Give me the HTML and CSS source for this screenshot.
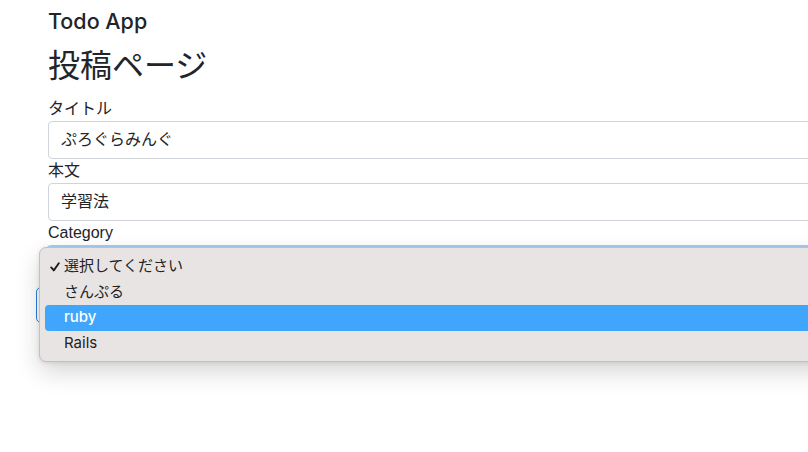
FILE: index.html
```html
<!DOCTYPE html>
<html lang="ja">
<head>
<meta charset="utf-8">
<title>Todo App</title>
<link rel="stylesheet" href="styles.css">
</head>
<body>
<div class="page">
  <div class="brand">Todo App</div>
  <h1 class="title">投稿ページ</h1>
  <form class="form">
    <label class="label">タイトル</label>
    <div class="input">ぷろぐらみんぐ</div>
    <label class="label">本文</label>
    <div class="input">学習法</div>
    <label class="label">Category</label>
    <div class="select-wrap">
      <div class="select"></div>
    </div>
    <div class="button"></div>
  </form>
  <div class="popup">
    <div class="item"><svg class="check" width="10" height="10" viewBox="0 0 10 10"><path d="M1.2 5.4 L3.8 8.4 L8.8 1.2" fill="none" stroke="#1e1e1e" stroke-width="1.9" stroke-linecap="round" stroke-linejoin="round"/></svg>選択してください</div>
    <div class="item">さんぷる</div>
    <div class="item active">ruby</div>
    <div class="item">Rails</div>
  </div>
</div>
</body>
</html>
```
FILE: styles.css
```css
html, body {
  margin: 0;
  padding: 0;
  background: #ffffff;
}
body {
  font-family: "Liberation Sans", "Noto Sans CJK JP", sans-serif;
  color: #212529;
  overflow: hidden;
  width: 808px;
  height: 452px;
}
.page {
  position: relative;
  padding-left: 48px;
  height: 452px;
}
.brand {
  font-family: Inter, "Liberation Sans", sans-serif;
  font-weight: 500;
  font-size: 21.5px;
  line-height: 26px;
  padding-top: 8px;
  height: 33px;
  box-sizing: border-box;
  color: #212529;
}
.title {
  margin: 0;
  font-weight: 400;
  font-size: 32px;
  line-height: 38px;
  padding-top: 14px;
  height: 52px;
  box-sizing: border-box;
  color: #212529;
}
.form {
  display: flex;
  flex-direction: column;
  padding-top: 12px;
}
.label {
  font-size: 16px;
  line-height: 24px;
  height: 24px;
}
.input {
  box-sizing: border-box;
  height: 38px;
  width: 800px;
  border: 1px solid #ced4da;
  border-radius: 4px;
  padding: 6px 12px;
  font-size: 16px;
  line-height: 24px;
  color: #212529;
}
.select {
  box-sizing: border-box;
  height: 38px;
  width: 800px;
  margin-top: 4px;
  border: 1px solid #86b7fe;
  border-radius: 4px;
  box-shadow: 0 0 0 4px #a9cdf6;
}
.button {
  box-sizing: border-box;
  margin-left: -12px;
  width: 80px;
  height: 36px;
  border: 1.5px solid #2f7de1;
  border-radius: 5px;
}
.popup {
  position: absolute;
  left: 39px;
  top: 247px;
  width: 820px;
  height: 115px;
  box-sizing: border-box;
  background: #e8e4e3;
  border: 1px solid #c3c0bf;
  border-radius: 7px;
  padding: 6px 5px;
  box-shadow: 0 10px 24px rgba(0, 0, 0, 0.16), 0 1px 4px rgba(0, 0, 0, 0.1);
}
.item {
  position: relative;
  height: 25.5px;
  line-height: 24.5px;
  padding-left: 19px;
  font-family: Inter, "Noto Sans CJK JP", sans-serif;
  font-size: 15px;
  color: #222222;
  border-radius: 4px;
}
.item.active {
  background: #3fa6fc;
  color: #ffffff;
  font-weight: 500;
}
.check {
  position: absolute;
  left: 5px;
  top: 8px;
}
```
